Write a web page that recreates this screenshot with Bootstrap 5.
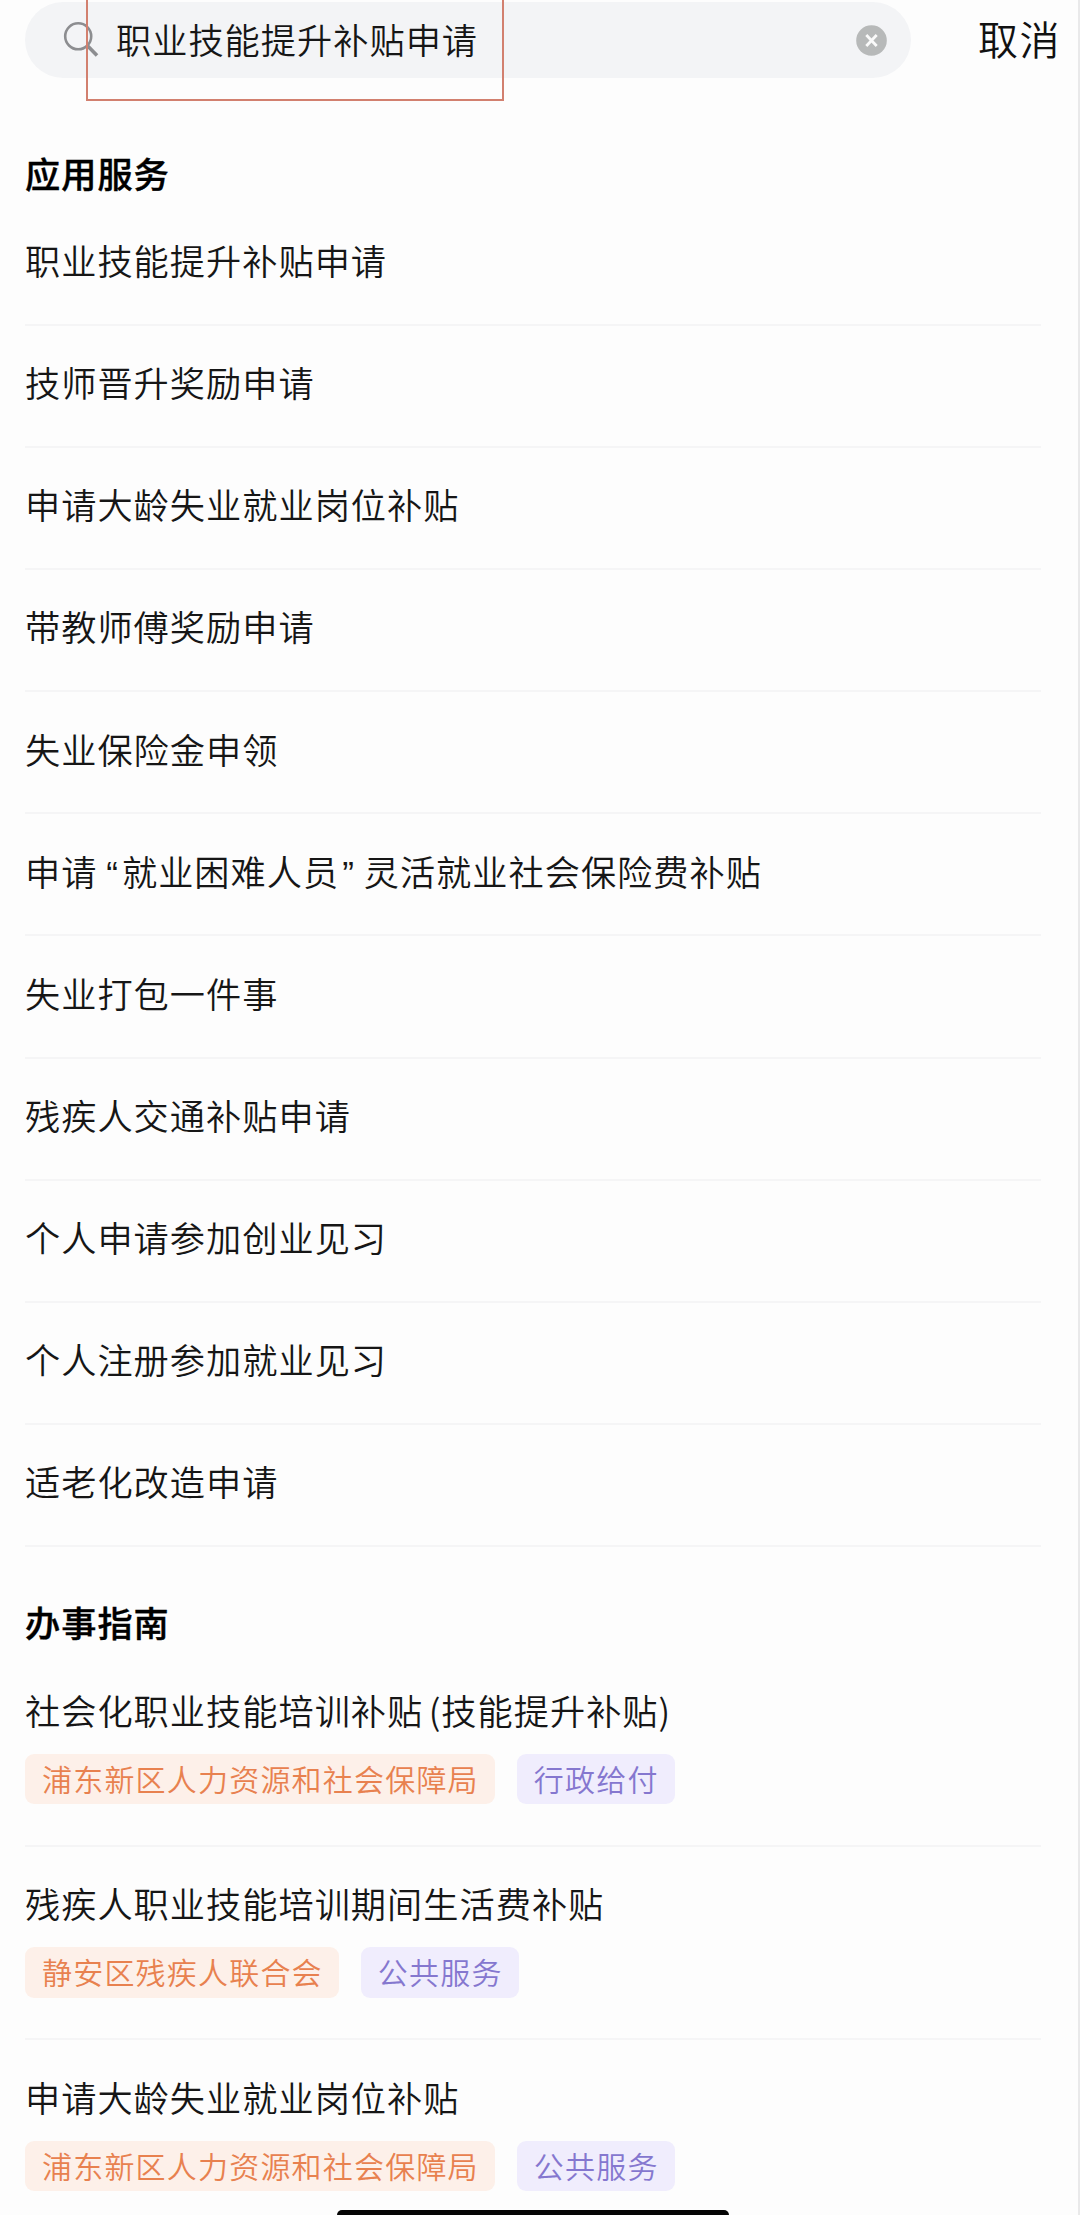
<!DOCTYPE html>
<html lang="zh-CN">
<head>
<meta charset="utf-8">
<meta name="viewport" content="width=device-width, initial-scale=1">
<title>搜索</title>
<link href="https://cdn.jsdelivr.net/npm/bootstrap@5.3.0/dist/css/bootstrap.min.css" rel="stylesheet">
<style>
  body { background: #fdfdfd; color: #161616; font-family: "Noto Sans CJK SC", sans-serif; font-size: 35.2px; font-weight: 350; letter-spacing: 1.02px; line-height: 54px; }
  .screen { height: 2215px; border-right: 2px solid #e9e9ea; padding-left: 25px; }
  .top-row { padding-top: 2px; }
  .search-pill { width: 886px; height: 76px; background: #f3f4f6; padding: 0 24px 0 38px; }
  .query { margin-left: 15px; padding-bottom: 3px; }
  .cancel { font-size: 40px; letter-spacing: 1.6px; margin-left: 67px; padding-bottom: 4px; color: #111; }
  .frame { left: 86px; top: -4px; width: 418px; height: 105px; border: 2px solid #d2806f; }
  .heading { font-size: 35.2px; font-weight: 500; line-height: 54px; color: #000; -webkit-text-stroke: .4px #000; }
  .results { width: 1016px; }
  .services { padding-top: 68px; }
  .guides { padding-top: 48.5px; }
  .result { height: 122.1px; border-bottom: 2px solid #f5f5f6; padding-bottom: 7.5px; }
  .result-first { height: 126px; padding-bottom: 4px; }
  .guide { height: 193.5px; border-bottom: 2px solid #f5f5f6; padding-top: 29.5px; }
  .guide-first { height: 197.5px; padding-top: 33.5px; }
  .guide:last-child { border-bottom: 0; }
  .tags { gap: 21.5px; margin-top: 17px; }
  .tag { height: 50.5px; line-height: 49px; font-size: 30px; letter-spacing: 1.2px; padding: 0 16.5px 0 17px; border-radius: 9px; }
  .tag-dept { background: #fdf0e9; color: #e8814f; }
  .tag-kind { background: #f0edfd; color: #8577cf; }
  .open-mark, .close-mark { display: inline-block; }
  .open-mark { text-align: right; }
  .quote { width: 24.5px; font-family: "Liberation Sans", sans-serif; line-height: 40px; }
  .open-mark.quote { padding-right: 3px; }
  .close-mark.quote { padding-left: 3px; }
  .paren { width: 18px; }
  .home-bar { left: 337px; bottom: 0; width: 392px; height: 5px; background: #050505; border-radius: 6px 6px 0 0; }
</style>
</head>
<body>
<div class="screen position-relative overflow-hidden">
  <header class="top-row d-flex align-items-center">
    <div class="search-pill rounded-pill d-flex align-items-center">
      <svg width="38" height="38" viewBox="0 0 38 38" fill="none" stroke="#8c8d90" aria-hidden="true"><circle cx="15.2" cy="15.3" r="13" stroke-width="2.6"/><path d="M24.5 24.8L34 34.6" stroke-width="3.6"/></svg>
      <span class="query">职业技能提升补贴申请</span>
      <svg class="ms-auto" width="31" height="31" viewBox="0 0 31 31" aria-hidden="true"><circle cx="15.5" cy="15.5" r="15.3" fill="#b7b9b9"/><path d="M10.3 10L20.7 21M20.7 10L10.3 21" stroke="#fafafa" stroke-width="2.8"/></svg>
    </div>
    <span class="cancel">取消</span>
  </header>
  <div class="frame position-absolute"></div>

  <section class="results services">
    <h2 class="heading mb-0">应用服务</h2>
    <div>
      <div class="result result-first d-flex align-items-center">职业技能提升补贴申请</div>
      <div class="result d-flex align-items-center">技师晋升奖励申请</div>
      <div class="result d-flex align-items-center">申请大龄失业就业岗位补贴</div>
      <div class="result d-flex align-items-center">带教师傅奖励申请</div>
      <div class="result d-flex align-items-center">失业保险金申领</div>
      <div class="result d-flex align-items-center"><span>申请<span class="open-mark quote">“</span>就业困难人员<span class="close-mark quote">”</span>灵活就业社会保险费补贴</span></div>
      <div class="result d-flex align-items-center">失业打包一件事</div>
      <div class="result d-flex align-items-center">残疾人交通补贴申请</div>
      <div class="result d-flex align-items-center">个人申请参加创业见习</div>
      <div class="result d-flex align-items-center">个人注册参加就业见习</div>
      <div class="result d-flex align-items-center">适老化改造申请</div>
    </div>
  </section>

  <section class="results guides">
    <h2 class="heading mb-0">办事指南</h2>
    <div class="guide guide-first">
      <div>社会化职业技能培训补贴<span class="open-mark paren">(</span>技能提升补贴<span class="close-mark paren">)</span></div>
      <div class="tags d-flex"><span class="tag tag-dept">浦东新区人力资源和社会保障局</span><span class="tag tag-kind">行政给付</span></div>
    </div>
    <div class="guide">
      <div>残疾人职业技能培训期间生活费补贴</div>
      <div class="tags d-flex"><span class="tag tag-dept">静安区残疾人联合会</span><span class="tag tag-kind">公共服务</span></div>
    </div>
    <div class="guide">
      <div>申请大龄失业就业岗位补贴</div>
      <div class="tags d-flex"><span class="tag tag-dept">浦东新区人力资源和社会保障局</span><span class="tag tag-kind">公共服务</span></div>
    </div>
  </section>
  <div class="home-bar position-absolute"></div>
</div>
<script src="https://cdn.jsdelivr.net/npm/bootstrap@5.3.0/dist/js/bootstrap.bundle.min.js"></script>
</body>
</html>
